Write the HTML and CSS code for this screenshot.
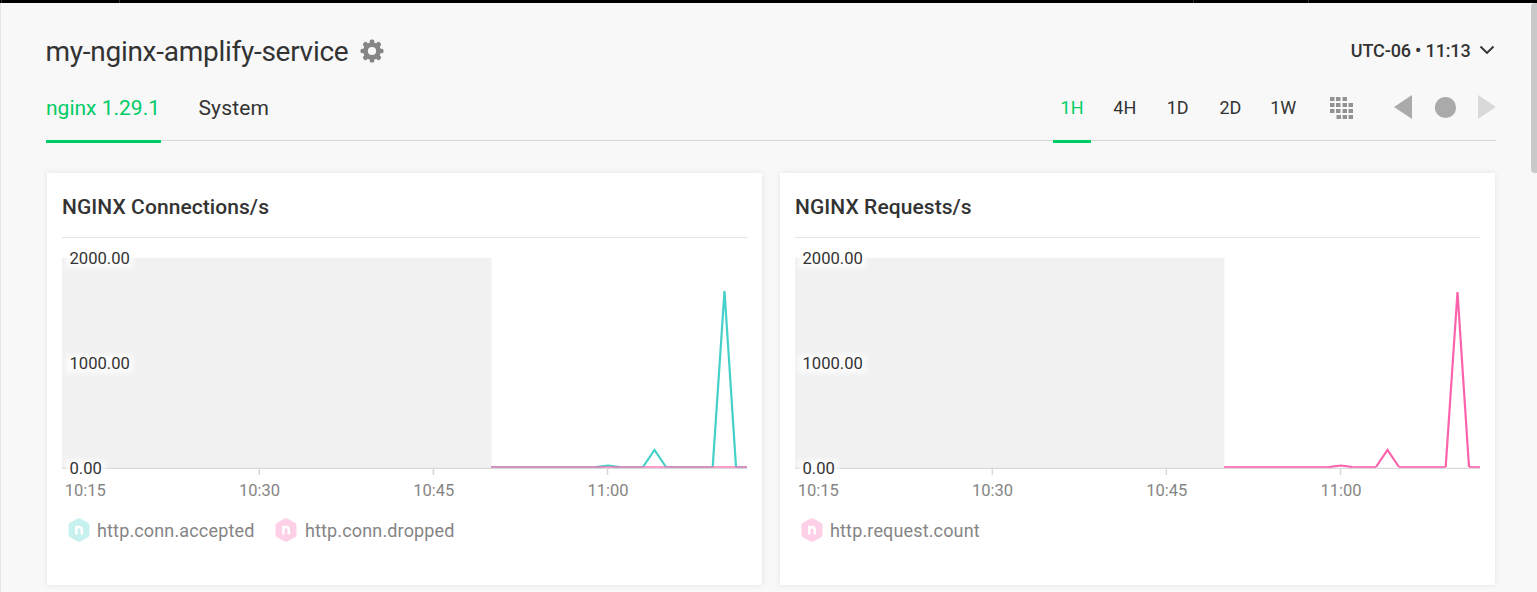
FILE: index.html
```html
<!DOCTYPE html>
<html lang="en">
<head>
<meta charset="utf-8">
<title>my-nginx-amplify-service</title>
<link rel="stylesheet" href="styles.css">
</head>
<body>
<svg class="defs" width="0" height="0" aria-hidden="true">
  <defs>
    <filter id="glow" x="-30%" y="-60%" width="160%" height="220%"><feGaussianBlur stdDeviation="2.6"/></filter>
    <symbol id="hex" viewBox="0 0 22 24">
      <path d="M9.6.5Q11-.2 12.4.5L20.3 5Q21.5 5.8 21.5 7.200V16.800Q21.500 18.200 20.300 19L12.400 23.500Q11 24.200 9.600 23.500L1.700 19Q.5 18.200.5 16.800V7.200Q.5 5.800 1.700 5Z" fill="currentColor"/>
      <path d="M8.300 16.500V7.800M8.300 11.300Q8.700 8.900 11 8.900Q13.800 8.900 13.800 12V16.500" fill="none" stroke="#fff" stroke-width="2.500"/>
    </symbol>
  </defs>
</svg>
<div class="topbar"><i class="notch n1"></i><i class="notch n2"></i><i class="notch n3"></i><i class="notch n4"></i></div>
<main class="page">
  <header class="head">
    <h1 class="title">my-nginx-amplify-service</h1>
    <svg class="gear" width="24" height="24" viewBox="-12 -12 24 24">
      <g fill="#858585">
        <circle r="8.800"/>
        <rect x="-11.500" y="-2.300" width="23" height="4.600" rx="1.600"/>
        <rect x="-11.500" y="-2.300" width="23" height="4.600" rx="1.600" transform="rotate(45)"/>
        <rect x="-11.500" y="-2.300" width="23" height="4.600" rx="1.600" transform="rotate(90)"/>
        <rect x="-11.500" y="-2.300" width="23" height="4.600" rx="1.600" transform="rotate(135)"/>
      </g>
      <circle r="4.100" fill="#f8f8f8"/>
    </svg>
    <div class="zone"><span>UTC-06 • 11:13</span>
      <svg class="chev" width="16" height="10" viewBox="0 0 16 10"><path d="M1.500 1.500L8 8L14.500 1.500" fill="none" stroke="#333" stroke-width="1.900"/></svg>
    </div>
  </header>
  <nav class="bar">
    <a class="tab active">nginx 1.29.1</a>
    <a class="tab">System</a>
    <div class="ranges">
      <a class="range active">1H</a><a class="range">4H</a><a class="range">1D</a><a class="range">2D</a><a class="range">1W</a>
    </div>
    <svg class="cal" width="24" height="24" viewBox="0 0 24 24">
      <g fill="#c7c7c7"><path d="M0 1h5v4H0zM6 1h5v4H6zM12 1h5v4h-5zM0 7h5v4H0zM6 7h5v4H6zM12 7h5v4h-5zM18 7h5v4h-5zM0 13h5v4H0zM6 13h5v4H6zM12 13h5v4h-5zM18 13h5v4h-5zM6 19h5v4H6zM12 19h5v4h-5zM18 19h5v4h-5z"/></g>
      <g fill="#929292"><path d="M0 1h4v4H0zM6 1h4v4H6zM13 1h4v4h-4zM0 7h4v4H0zM6 7h4v4H6zM13 7h4v4h-4zM19 7h4v4h-4zM0 13h4v4H0zM6 13h4v4H6zM13 13h4v4h-4zM19 13h4v4h-4zM7 19h4v4H7zM13 19h4v4h-4zM19 19h4v4h-4z"/></g>
    </svg>
    <svg class="play" width="102" height="24" viewBox="0 0 102 24">
      <path d="M0 12L18 0V24Z" fill="#aaa"/><circle cx="51.500" cy="12.500" r="10.600" fill="#aaa"/><path d="M84 0L102 12L84 24Z" fill="#d9d9d9"/>
    </svg>
  </nav>
  <section class="cards">
    <article class="card">
      <h2 class="card-title">NGINX Connections/s</h2>
      <svg class="chart" width="685" height="265" viewBox="0 0 685 265">
        <path d="M0 19.700H429.500V230H0Z" fill="#f1f1f1"/>
        <path d="M0 230.300H685" stroke="#d9d9d9" stroke-width="1.300"/>
        <path d="M197.300 230V237M371.300 230V237M545.500 230V237" stroke="#d8d8d8" stroke-width="1.500"/>
        <g class="halo"><rect x="4" y="12" width="67" height="18"/><rect x="4" y="117" width="67" height="18"/><rect x="4" y="222" width="39" height="18"/></g>
        <g class="value"><text x="7.500" y="26">2000.00</text><text x="7.500" y="131">1000.00</text><text x="7.500" y="236">0.00</text></g>
        <g class="time"><text x="23.200" y="258">10:15</text><text x="197.500" y="258">10:30</text><text x="371.700" y="258">10:45</text><text x="546" y="258">11:00</text></g>
        <path class="line teal base" d="M429 229H534M557.500 229H581M604 229H650.700M674 229H685"/>
        <path class="line teal" d="M534 229L546 227.500L557.500 229M581 229L592.500 212L604 229M650.700 229L662.500 53L674 229"/>
        <path class="line pink flat" d="M429 229H685"/>
      </svg>
      <div class="legend">
        <span class="key"><svg class="hex teal-hex" width="22" height="24"><use href="#hex"/></svg>http.conn.accepted</span>
        <span class="key"><svg class="hex pink-hex" width="22" height="24"><use href="#hex"/></svg>http.conn.dropped</span>
      </div>
    </article>
    <article class="card">
      <h2 class="card-title">NGINX Requests/s</h2>
      <svg class="chart" width="685" height="265" viewBox="0 0 685 265">
        <path d="M0 19.700H429.500V230H0Z" fill="#f1f1f1"/>
        <path d="M0 230.300H685" stroke="#d9d9d9" stroke-width="1.300"/>
        <path d="M197.300 230V237M371.300 230V237M545.500 230V237" stroke="#d8d8d8" stroke-width="1.500"/>
        <g class="halo"><rect x="4" y="12" width="67" height="18"/><rect x="4" y="117" width="67" height="18"/><rect x="4" y="222" width="39" height="18"/></g>
        <g class="value"><text x="7.500" y="26">2000.00</text><text x="7.500" y="131">1000.00</text><text x="7.500" y="236">0.00</text></g>
        <g class="time"><text x="23.200" y="258">10:15</text><text x="197.500" y="258">10:30</text><text x="371.700" y="258">10:45</text><text x="546" y="258">11:00</text></g>
        <path class="line pink base-pink" d="M429 229H534M557.500 229H581M604 229H650.700M674 229H685"/>
        <path class="line pink" d="M534 229L546 227.500L557.500 229M581 229L592.500 212L604 229M650.700 229L662.500 54L674 229"/>
      </svg>
      <div class="legend">
        <span class="key"><svg class="hex pink-hex" width="22" height="24"><use href="#hex"/></svg>http.request.count</span>
      </div>
    </article>
  </section>
</main>
<div class="scroll-thumb"></div>
</body>
</html>
```
FILE: styles.css
```css
* { box-sizing: border-box; }
body {
  margin: 0;
  height: 592px;
  overflow: hidden;
  position: relative;
  background: #f8f8f8;
  color: #333;
  font-family: Roboto, sans-serif;
}
.defs { position: absolute; }
.topbar { height: 3px; background: #000; position: relative; }
.notch { position: absolute; top: 0; width: 1px; height: 3px; background: #333; }
.n1 { left: 1px; }
.n2 { left: 119px; }
.n3 { left: 1193px; }
.n4 { left: 1308px; }
.page {
  height: 589px;
  border-left: 1px solid #e6e6e6;
  padding: 24px 41px 0 45px;
}
.head { height: 48px; display: flex; align-items: center; }
.title { margin: 0 0 0 -0.5px; padding-top: 2px; font-size: 28px; font-weight: 400; line-height: 48px; letter-spacing: -0.27px; white-space: nowrap; }
.gear { margin-left: 12px; }
.zone { margin-left: auto; display: flex; align-items: center; gap: 8.500px; padding-bottom: 2px; font-size: 18px; font-weight: 500; letter-spacing: -0.15px; white-space: nowrap; }
.chev { margin-right: 1px; }
.bar { height: 66px; display: flex; align-items: center; border-bottom: 1px solid #d8d8d8; }
.tab, .range {
  height: 68px;
  line-height: 67px;
  align-self: flex-start;
  border-bottom: 3px solid transparent;
  white-space: nowrap;
}
.tab { font-size: 21px; margin-right: 37.500px; }
.tab.active { width: 115px; }
.tab + .tab { letter-spacing: 0.15px; }
.ranges { margin-left: auto; display: flex; gap: 14.800px; align-self: flex-start; }
.range { width: 38px; line-height: 65px; text-align: center; font-size: 18px; }
.active { color: #0c6; border-color: #0c6; }
.cal { margin-left: 27.800px; }
.play { margin-left: 40px; margin-bottom: 1px; }
.cards { padding: 32px 1px 0; display: grid; grid-template-columns: 715px 715px; gap: 18px; }
.card { height: 412px; padding: 0 15px; background: #fff; box-shadow: 0 0 6px rgba(0, 0, 0, .09); }
.card-title {
  margin: 0;
  height: 65px;
  line-height: 68px;
  border-bottom: 1px solid #e5e5e5;
  font-size: 21px;
  font-weight: 500;
  letter-spacing: 0.07px;
  white-space: nowrap;
}
.chart { display: block; }
.halo { fill: #fff; opacity: .8; filter: url(#glow); }
.value { font-size: 16.600px; fill: #333; }
.time { font-size: 16.500px; fill: #858585; text-anchor: middle; }
.line { fill: none; stroke-width: 2.200; }
.teal { stroke: #45d0c9; }
.pink { stroke: #fb62ae; }
.base { opacity: .6; }
.base-pink { opacity: .8; }
.flat { opacity: .62; }
.legend { display: flex; gap: 21px; padding: 15px 0 0 5.500px; }
.key { display: flex; align-items: center; gap: 7.500px; height: 24px; font-size: 18px; letter-spacing: 0.15px; color: #858585; white-space: nowrap; }
.teal-hex { color: #c7f1ef; }
.pink-hex { color: #fed0e7; }
.scroll-thumb { position: absolute; right: 0; top: 3px; width: 6px; height: 170px; border-radius: 4px 0 0 4px; background: #c8c9ca; }
```
